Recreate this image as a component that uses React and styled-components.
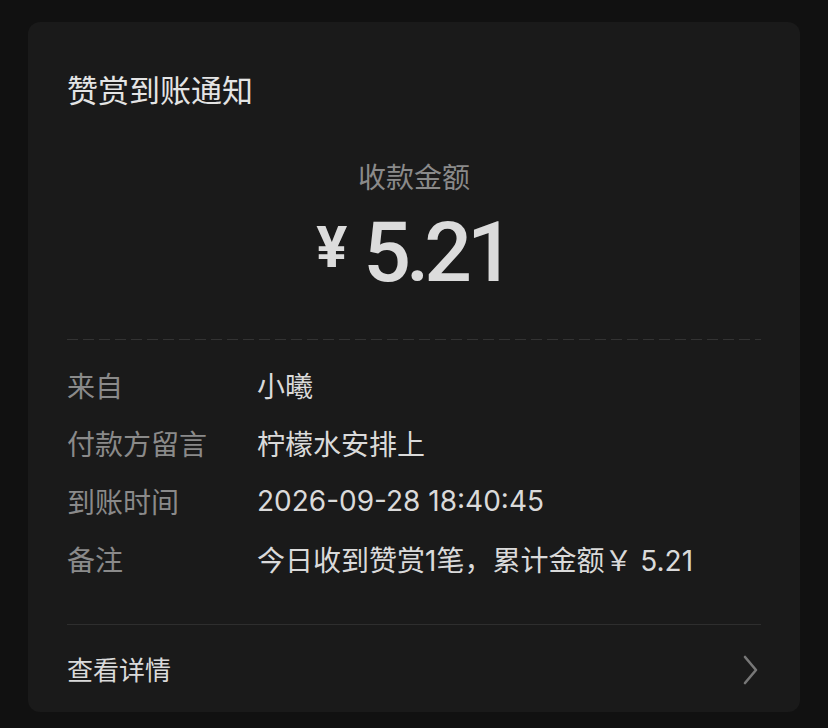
import React from 'react';
import styled, { createGlobalStyle } from 'styled-components';

const GlobalStyle = createGlobalStyle`
  html, body {
    margin: 0;
    padding: 0;
    background: #111111;
  }
  body {
    font-family: "Inter", "Noto Sans CJK SC", sans-serif;
    -webkit-font-smoothing: antialiased;
  }
`;

const Page = styled.div`
  width: 828px;
  height: 728px;
  padding: 22px 28px 16px;
  box-sizing: border-box;
  background: #111111;
`;

const Card = styled.div`
  width: 772px;
  height: 690px;
  box-sizing: border-box;
  padding: 47px 39px 0;
  background: #1a1a1a;
  border-radius: 12px;
  display: flex;
  flex-direction: column;
`;

const Title = styled.h1`
  margin: 0;
  font-family: "Noto Sans CJK SC", sans-serif;
  font-size: 31px;
  font-weight: 400;
  line-height: 40px;
  color: #e4e4e4;
`;

const AmountBlock = styled.div`
  margin-top: 47px;
  display: flex;
  flex-direction: column;
  align-items: center;
`;

const AmountLabel = styled.div`
  font-family: "Noto Sans CJK SC", sans-serif;
  font-size: 28px;
  line-height: 40px;
  color: #8a8a8a;
`;

const Amount = styled.div`
  margin-top: 12px;
  margin-right: 2px;
  height: 90px;
  display: flex;
  align-items: center;
  gap: 16px;
  color: #dcdcdc;
`;

const Currency = styled.span`
  font-family: "Roboto", sans-serif;
  font-size: 58px;
  font-weight: 700;
  line-height: 1;
  margin-bottom: 12px;
`;

const Figure = styled.span`
  font-family: "Roboto", sans-serif;
  font-size: 84px;
  font-weight: 500;
  letter-spacing: -5px;
  line-height: 1;
`;

const Divider = styled.div`
  margin-top: ${p => p.$top}px;
  height: 1px;
  flex-shrink: 0;
  background: ${p =>
    p.$dashed
      ? 'repeating-linear-gradient(90deg, #333 0 11px, transparent 11px 16px)'
      : '#2e2e2e'};
`;

const Details = styled.div`
  margin-top: 16px;
  display: flex;
  flex-direction: column;
`;

const Row = styled.div`
  display: grid;
  grid-template-columns: 190px 1fr;
  height: 58px;
  align-items: center;
  font-size: 28px;
`;

const Label = styled.span`
  font-family: "Noto Sans CJK SC", sans-serif;
  color: #8a8a8a;
`;

const Value = styled.span`
  color: #dadada;
`;

const Footer = styled.div`
  flex: 1;
  display: flex;
  align-items: center;
  justify-content: space-between;
`;

const FooterText = styled.span`
  font-family: "Noto Sans CJK SC", sans-serif;
  font-size: 26px;
  color: #dadada;
`;

const Chevron = () => (
  <svg width="20" height="30" viewBox="0 0 20 30" style={{ marginTop: 3 }}>
    <path d="M4 2 L15 15 L4 28" fill="none" stroke="#777" strokeWidth="2.6" strokeLinecap="round" strokeLinejoin="round" />
  </svg>
);

const details = [
  { label: '来自', value: '小曦' },
  { label: '付款方留言', value: '柠檬水安排上' },
  { label: '到账时间', value: '2026-09-28 18:40:45' },
  { label: '备注', value: '今日收到赞赏1笔，累计金额￥ 5.21' },
];

export default function App() {
  return (
    <>
      <GlobalStyle />
      <Page>
        <Card>
          <Title>赞赏到账通知</Title>
          <AmountBlock>
            <AmountLabel>收款金额</AmountLabel>
            <Amount>
              <Currency>¥</Currency>
              <Figure>5.21</Figure>
            </Amount>
          </AmountBlock>
          <Divider $dashed $top={41} />
          <Details>
            {details.map(d => (
              <Row key={d.label}>
                <Label>{d.label}</Label>
                <Value>{d.value}</Value>
              </Row>
            ))}
          </Details>
          <Divider $top={36} />
          <Footer>
            <FooterText>查看详情</FooterText>
            <Chevron />
          </Footer>
        </Card>
      </Page>
    </>
  );
}
